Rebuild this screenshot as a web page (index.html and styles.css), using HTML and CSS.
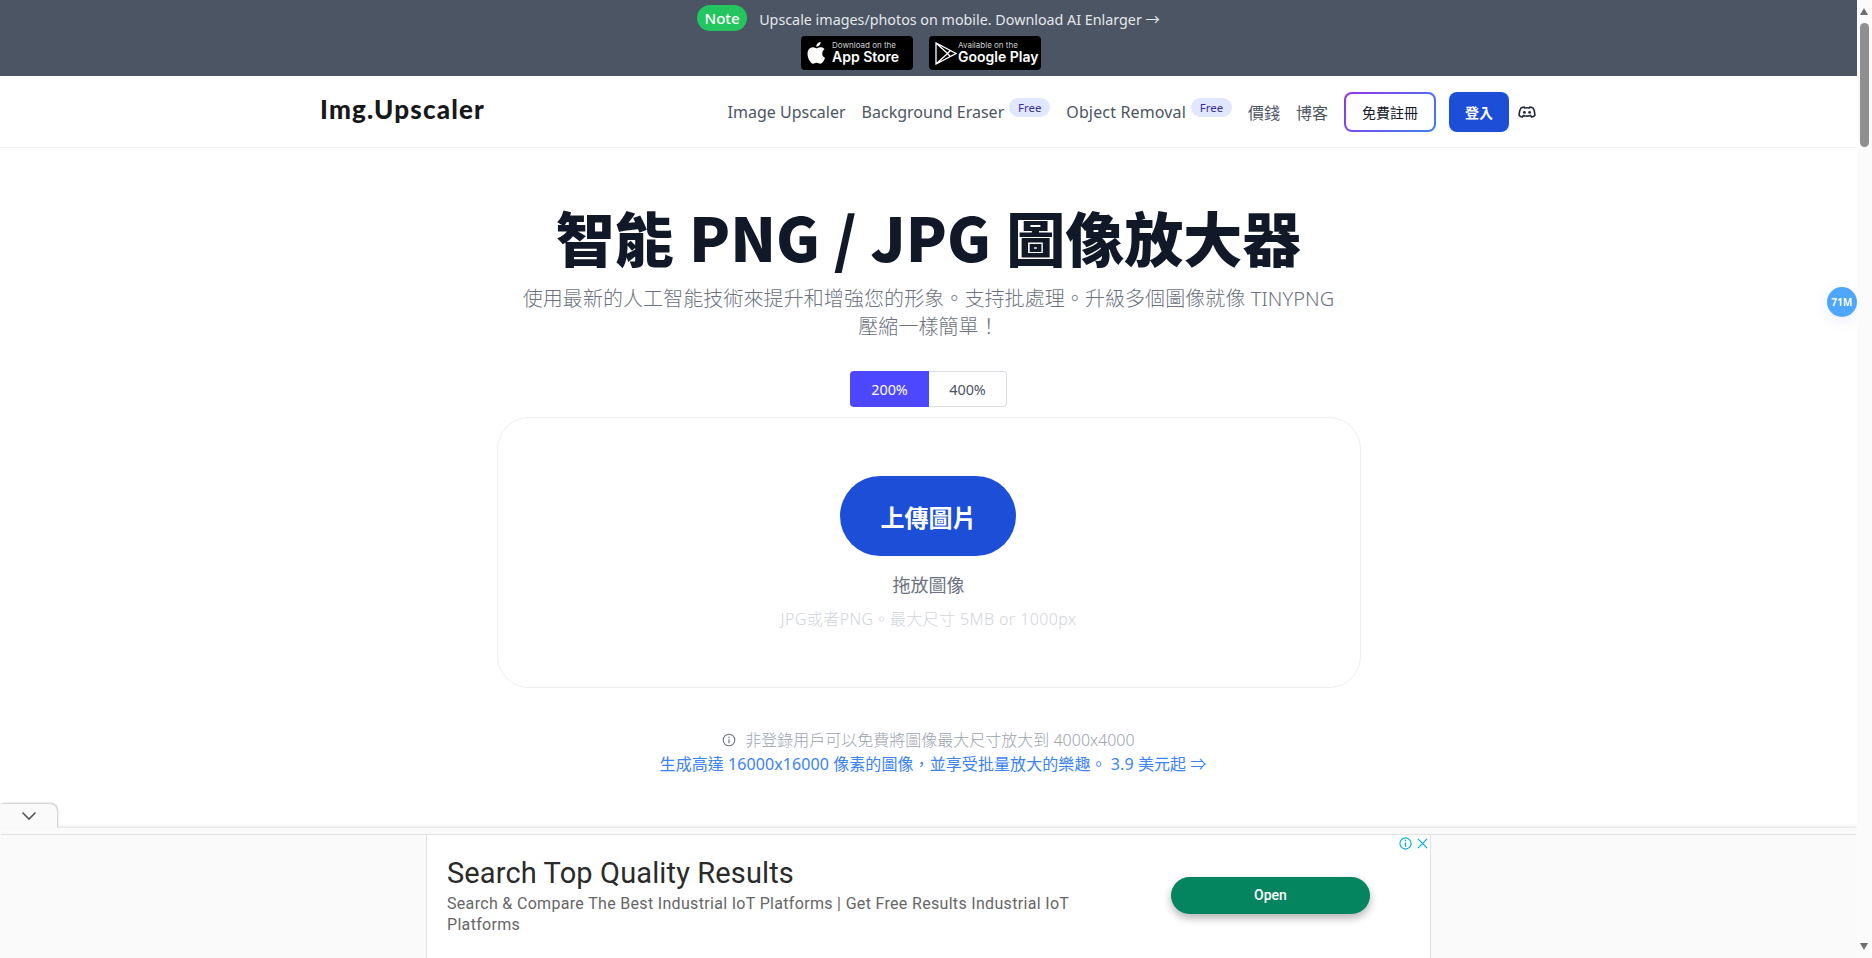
FILE: index.html
```html
<!DOCTYPE html>
<html lang="zh-Hant">
<head><meta charset="utf-8"><title>Img.Upscaler</title><link rel="stylesheet" href="styles.css"></head>
<body>
<div class="page">
  <div class="banner">
    <div class="note-row"><span class="note">Note</span><span class="note-text">Upscale images/photos on mobile. Download AI Enlarger →</span></div>
    <div class="stores">
      <div class="store store-apple"><svg width="18" height="22" viewBox="3.500 2.300 16 19.600"><path fill="#fff" d="M17.050 12.500c0-2.400 2-3.600 2.100-3.700-1.100-1.700-2.900-1.900-3.500-1.900-1.500-.2-2.900.9-3.700.9s-1.900-.9-3.200-.8c-1.600 0-3.100 1-4 2.400-1.700 3-.4 7.400 1.200 9.800.8 1.200 1.800 2.500 3 2.400 1.200 0 1.700-.8 3.100-.8s1.900.8 3.200.8 2.200-1.200 3-2.400c.9-1.400 1.300-2.700 1.300-2.800-.1 0-2.500-1-2.500-3.900zM14.600 5.300c.7-.8 1.100-1.900 1-3-1 0-2.100.6-2.800 1.400-.6.7-1.200 1.900-1 2.900 1.100.1 2.100-.5 2.800-1.300z"/></svg><div class="store-text"><span class="store-small">Download on the</span><span class="store-big">App Store</span></div></div>
      <div class="store store-play"><svg width="22" height="23" viewBox="0 0 22 23"><path fill="none" stroke="#fff" stroke-width="1.300" d="M1 1v21l20-10.500zM1 1l11.500 10.500L1 22M12.500 11.500l2.800-3M12.500 11.500l2.800 3"/></svg><div class="store-text"><span class="store-small">Available on the</span><span class="store-big">Google Play</span></div></div>
    </div>
  </div>
  <header class="nav">
    <div class="brand">Img.Upscaler</div>
    <nav class="links">
      <a>Image Upscaler</a>
      <a class="has-badge">Background Eraser<span class="free">Free</span></a>
      <a class="has-badge object-link">Object Removal<span class="free">Free</span></a>
      <a>價錢</a>
      <a>博客</a>
      <span class="btn-register">免費註冊</span>
      <span class="btn-login">登入</span>
      <svg class="discord" width="18" height="14" viewBox="0 0 20 16"><path fill="none" stroke="#1f2937" stroke-width="1.800" d="M6.500 2.200C5 2.500 3.800 3 3 3.500 1.600 5.800.9 8.500 1 11.800c1.100 1 2.400 1.600 3.800 2l1-1.800c2.800 1 5.600 1 8.400 0l1 1.800c1.400-.4 2.700-1 3.800-2 .1-3.300-.6-6-2-8.300-.8-.5-2-1-3.500-1.300l-.6 1.200c-1.900-.3-3.900-.3-5.800 0z"/><circle cx="7" cy="8.500" r="1.600" fill="#1f2937"/><circle cx="13" cy="8.500" r="1.600" fill="#1f2937"/></svg>
    </nav>
  </header>
  <main class="main">
    <h1 class="title">智能 <span class="title-latin">PNG / JPG</span> 圖像放大器</h1>
    <p class="subtitle">使用最新的人工智能技術來提升和增強您的形象。支持批處理。升級多個圖像就像 TINYPNG<br>壓縮一樣簡單！</p>
    <div class="toggle"><span class="t-on">200%</span><span class="t-off">400%</span></div>
    <section class="drop">
      <div class="upload">上傳圖片</div>
      <div class="drag">拖放圖像</div>
      <div class="hint">JPG或者PNG。最大尺寸 5MB or 1000px</div>
    </section>
    <p class="info"><svg width="14" height="14" viewBox="0 0 14 14"><circle cx="7" cy="7" r="5.800" fill="none" stroke="#6b7280" stroke-width="1.100"/><path stroke="#6b7280" stroke-width="1.200" d="M7 6.200v4M7 3.800v1.200"/></svg>非登錄用戶可以免費將圖像最大尺寸放大到 4000x4000</p>
    <p class="promo">生成高達 16000x16000 像素的圖像，並享受批量放大的樂趣。 3.9 美元起 ⇒</p>
  </main>
</div>
<div class="badge">71M</div>
<div class="scrollbar"><span class="sb-up"></span><span class="sb-thumb"></span><span class="sb-down"></span></div>
<div class="adbar">
  <div class="ad-tab"><svg width="16" height="10" viewBox="0 0 16 10"><path d="M1.500 1.500 8 8l6.500-6.500" fill="none" stroke="#555" stroke-width="1.600"/></svg></div>
  <div class="ad">
    <div class="ad-copy">
      <div class="ad-title">Search Top Quality Results</div>
      <div class="ad-desc">Search &amp; Compare The Best Industrial IoT Platforms | Get Free Results Industrial IoT Platforms</div>
    </div>
    <div class="ad-open">Open</div>
    <div class="ad-marks"><svg width="13" height="13" viewBox="0 0 14 14"><circle cx="7" cy="7" r="6" fill="none" stroke="#00aecd" stroke-width="1.200"/><path stroke="#00aecd" stroke-width="1.500" d="M7 6v4.500M7 3v1.600"/></svg><svg width="11" height="11" viewBox="0 0 12 12"><path stroke="#00aecd" stroke-width="1.300" d="M1 1l10 10M11 1 1 11"/></svg></div>
  </div>
</div>
</body>
</html>
```
FILE: styles.css
```css
* { box-sizing: border-box; }
html, body { margin: 0; height: 958px; overflow: hidden; background: #fff; }
body { font-family: "Noto Sans", "Noto Sans CJK TC", sans-serif; color: #111827; }
.page { width: 1857px; }
.banner { height: 76px; background: #4b5563; display: flex; flex-direction: column; align-items: center; padding-top: 5px; gap: 5px; }
.note-row { display: flex; align-items: center; gap: 12px; height: 26px; }
.note { background: #22c55e; color: #fff; font-size: 15px; font-weight: 500; border-radius: 13px; width: 50px; text-align: center; height: 26px; line-height: 26px; }
.note-text { color: #e5e7eb; font-size: 14.300px; }
.stores { display: flex; gap: 16px; margin-left: -15px; }
.store { width: 112px; height: 34px; background: #000; border-radius: 4px; color: #fff; display: flex; align-items: center; padding-left: 6px; }
.store-apple { gap: 7px; }
.store-play { gap: 1px; }
.store-text { display: flex; flex-direction: column; font-family: Inter, sans-serif; padding-bottom: 3px; }
.store-small { font-size: 8px; line-height: 10px; color: #cfcfcf; white-space: nowrap; }
.store-big { font-size: 14px; line-height: 14px; font-weight: 600; white-space: nowrap; }
.nav { height: 72px; border-bottom: 1px solid #f2f2f2; display: flex; align-items: center; justify-content: space-between; padding: 0 321px 0 320px; }
.brand { font-family: Lato, "Noto Sans", sans-serif; font-weight: 900; font-size: 26px; letter-spacing: 1.200px; color: #18181b; margin-top: -6px; }
.links { display: flex; align-items: center; gap: 16px; font-size: 16px; color: #4b5563; }
.has-badge { position: relative; margin-right: 46px; }
.object-link { letter-spacing: .15px; }
.free { position: absolute; left: calc(100% + 5px); top: -3px; width: 41px; height: 19px; line-height: 19px; text-align: center; font-size: 11.500px; letter-spacing: 0; background: #e0e7ff; color: #3730a3; border-radius: 10px; }
.btn-register { width: 92px; height: 40px; border-radius: 8px; border: 2px solid transparent; background: linear-gradient(#fff, #fff) padding-box, linear-gradient(135deg, #9333ea, #3b82f6) border-box; color: #111827; font-size: 14px; display: flex; align-items: center; justify-content: center; }
.btn-login { width: 60px; height: 40px; border-radius: 8px; background: #1d4ed8; color: #fff; font-size: 14px; font-weight: 700; display: flex; align-items: center; justify-content: center; margin-left: -3px; }
.discord { margin-left: -7px; }
.main { display: flex; flex-direction: column; align-items: center; }
.title { margin: 55px 0 0; height: 72px; font-size: 59px; line-height: 72px; font-weight: 800; color: #111827; white-space: nowrap; }
.title-latin { font-family: "Noto Sans CJK TC", sans-serif; font-weight: 900; font-size: 60px; line-height: 1; }
.subtitle { margin: 10px 0 0; width: 820px; text-align: center; font-size: 20px; line-height: 28px; font-weight: 300; letter-spacing: .08px; color: #6b7280; }
.toggle { display: flex; margin-top: 30px; height: 36px; }
.t-on, .t-off { font-size: 14.400px; display: flex; align-items: center; justify-content: center; }
.t-on { width: 79px; background: #4d47ff; color: #fff; border-radius: 4px 0 0 4px; }
.t-off { width: 78px; border: 1px solid #dcdde3; border-left: 0; color: #4b5563; border-radius: 0 4px 4px 0; }
.drop { margin-top: 10px; width: 864px; height: 271px; border: 1px solid #eceef1; border-radius: 32px; display: flex; flex-direction: column; align-items: center; padding-top: 58px; }
.upload { width: 176px; height: 80px; border-radius: 40px; margin-right: 2px; padding-left: 2px; background: #1d4ed8; color: #fff; font-size: 24px; font-weight: 700; display: flex; align-items: center; justify-content: center; }
.drag { margin-top: 15px; font-size: 18px; line-height: 28px; color: #6b7280; }
.hint { margin-top: 8px; font-size: 16px; line-height: 24px; font-weight: 300; color: #d1d5db; letter-spacing: .4px; }
.info { margin: 40px 0 0 0; font-size: 16px; line-height: 24px; font-weight: 300; color: #9ca3af; display: flex; align-items: center; gap: 9px; }
.promo { margin: 0 0 0 9px; font-size: 16px; line-height: 24px; letter-spacing: .08px; color: #3b82f6; font-weight: 400; }
.badge { position: fixed; left: 1827px; top: 287px; width: 30px; height: 30px; border-radius: 50%; background: #4fa6ff; color: #fff; font-size: 10px; font-weight: 700; display: flex; align-items: center; justify-content: center; box-shadow: 0 4px 14px rgba(79,100,255,.12); }
.scrollbar { position: fixed; right: 0; top: 0; bottom: 0; width: 15px; background: #fbfbfb; z-index: 3; }
.sb-thumb { position: absolute; left: 3px; top: 23px; width: 9px; height: 124px; background: #8f8f8f; border-radius: 5px; }
.sb-up { position: absolute; left: 3px; top: 8px; border-left: 4.500px solid transparent; border-right: 4.500px solid transparent; border-bottom: 7px solid #6e6e6e; }
.sb-down { position: absolute; left: 3px; bottom: 8px; border-left: 4.500px solid transparent; border-right: 4.500px solid transparent; border-top: 7px solid #6e6e6e; }
.adbar { position: fixed; left: 0; right: 15px; top: 828px; bottom: 0; padding-top: 6px; background: #fafafa; box-shadow: 0 -1px 3px rgba(0,0,0,.14); display: flex; justify-content: center; z-index: 2; }
.ad-tab { position: absolute; left: 0; top: -24px; width: 57px; height: 24px; background: #fafafa; border-radius: 3px 7px 0 0; box-shadow: 1px -1px 2px rgba(0,0,0,.22); display: flex; align-items: center; justify-content: center; }
.ad { position: relative; width: 1005px; height: 124px; background: #fff; border: 1px solid #e2e2e2; border-bottom: 0; display: flex; align-items: center; padding: 0 0 3px 20px; }
.ad::before { content: ""; position: absolute; left: -426px; right: -426px; top: -1px; border-top: 1px solid #e2e2e2; }
.ad-copy { width: 660px; font-family: Roboto, sans-serif; }
.ad-title { font-size: 29px; line-height: 36px; letter-spacing: .13px; color: #2a2a2a; }
.ad-desc { margin-top: 2px; font-size: 16px; line-height: 21px; letter-spacing: .32px; color: #666; }
.ad-open { margin-left: 64px; width: 199px; height: 37px; background: #05855f; color: #fff; font-family: Roboto, sans-serif; font-size: 14px; font-weight: 500; border-radius: 19px; display: flex; align-items: center; justify-content: center; box-shadow: 0 4px 8px rgba(0,0,0,.3); }
.ad-marks { position: absolute; right: 2px; top: 2px; display: flex; gap: 5px; align-items: center; }
```
